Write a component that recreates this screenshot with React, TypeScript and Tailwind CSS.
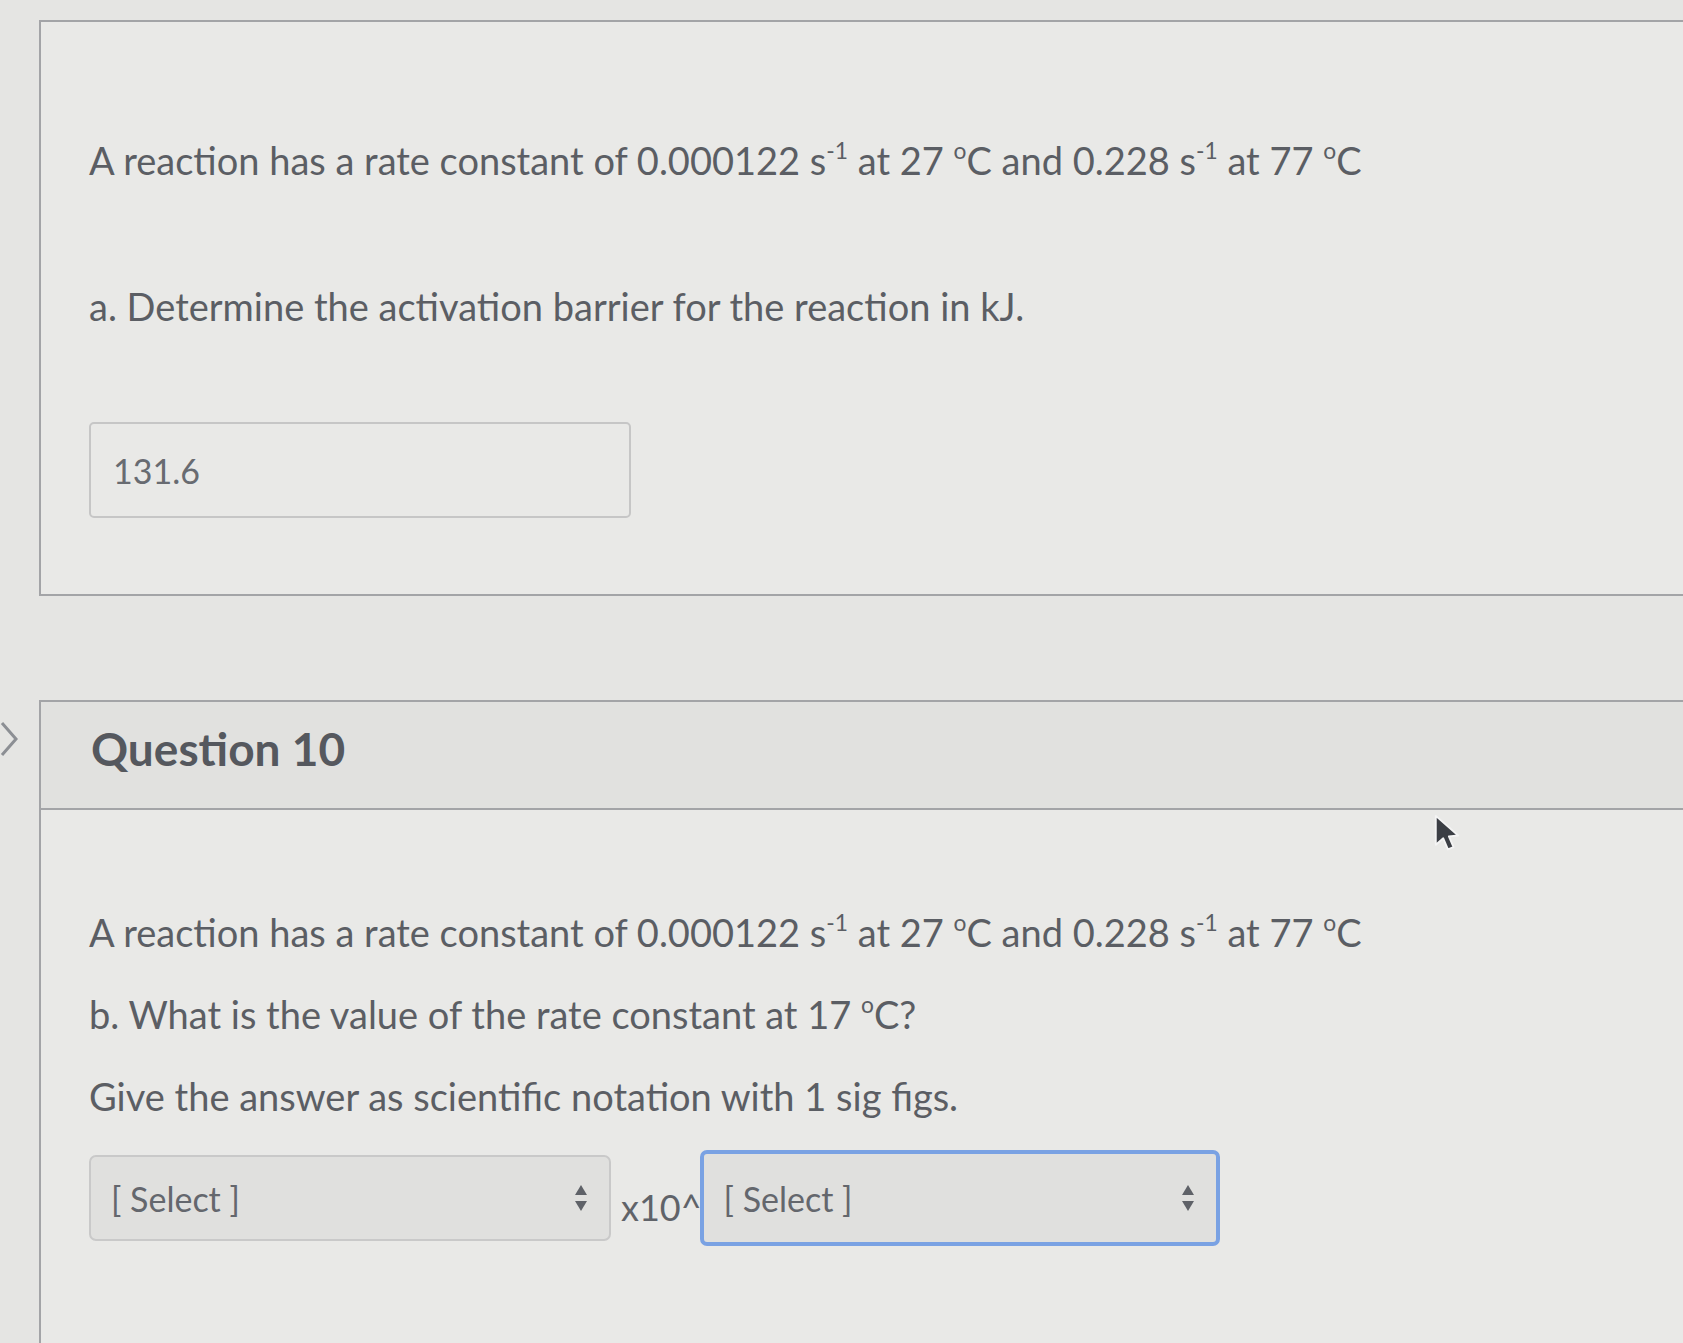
import React from 'react';

const textColor = 'text-[#5b5e64]';

function Sup({ children }: { children: React.ReactNode }) {
  return <sup className="text-[0.6em] -top-[0.7em]">{children}</sup>;
}

function RateLine() {
  return (
    <p className="leading-[48px]">
      A reaction has a rate constant of 0.000122 s<Sup>-1</Sup> at 27 <Sup>o</Sup>C and 0.228 s<Sup>-1</Sup> at 77{' '}
      <Sup>o</Sup>C
    </p>
  );
}

function UpDown() {
  return (
    <svg width="16" height="30" viewBox="0 0 16 30" className="shrink-0">
      <path d="M8 2 L14 12 L2 12 Z" fill="#5f6268" />
      <path d="M8 28 L14 18 L2 18 Z" fill="#5f6268" />
    </svg>
  );
}

function SelectBox({ focused, width }: { focused?: boolean; width: string }) {
  return (
    <div
      className={`${width} flex items-center justify-between rounded-[7px] bg-[#e0e0de] pl-5 pr-5 text-[34px] ${
        focused
          ? 'h-[96px] border-[4px] border-[#7aa2e3]'
          : 'h-[86px] border-2 border-[#c9c9c9]'
      }`}
    >
      <span className="text-[#64676d]">[ Select ]</span>
      <UpDown />
    </div>
  );
}

export default function App() {
  return (
    <div
      className={`min-h-[1343px] w-full bg-[#e5e5e3] ${textColor} flex`}
      style={{ fontFamily: 'Lato, "Open Sans", sans-serif' }}
    >
      {/* left gutter */}
      <div className="w-[39px] shrink-0 relative">
        <svg
          width="20"
          height="40"
          viewBox="0 0 20 40"
          className="absolute left-0 top-[719px]"
        >
          <path d="M2 4 L16 20 L2 36" fill="none" stroke="#8c8f94" strokeWidth="3" />
        </svg>
      </div>

      <div className="flex-1 flex flex-col pt-[20px]">
        {/* Previous question body */}
        <section className="border-t-2 border-b-2 border-l-2 border-[#a3a4a7] bg-[#e9e9e7] h-[576px] pl-[48px] pt-[114px] text-[38px]">
          <RateLine />
          <p className="leading-[48px] mt-[98px]">a. Determine the activation barrier for the reaction in kJ.</p>
          <div className="mt-[92px] w-[542px] h-[96px] rounded-[5px] border-2 border-[#c6c6c6] bg-[#e9e9e7] flex items-center pl-[22px] text-[34px] text-[#686b71]">
            131.6
          </div>
        </section>

        {/* Question 10 */}
        <section className="mt-[104px] flex-1 border-t-2 border-l-2 border-[#a3a4a7] bg-[#e9e9e7]">
          <header className="h-[108px] border-b-2 border-[#a3a4a7] bg-[#e1e1df] pl-[50px] flex items-center">
            <h2 className="text-[46px] font-bold text-[#55585e] -mt-[14px]">Question 10</h2>
          </header>

          <div className="relative pl-[48px] pt-[98px] text-[38px]">
            <svg
              width="28"
              height="42"
              viewBox="0 0 30 45"
              className="absolute left-[1392px] top-[4px]"
            >
              <path
                d="M3 2 L3 33 L11 26 L16 38 L22 35.5 L17 24 L27 23 Z"
                fill="#3b3e44"
                stroke="#f4f4f4"
                strokeWidth="2"
                strokeLinejoin="round"
              />
            </svg>

            <RateLine />
            <p className="leading-[48px] mt-[34px]">
              b. What is the value of the rate constant at 17 <Sup>o</Sup>C?
            </p>
            <p className="leading-[48px] mt-[34px]">Give the answer as scientific notation with 1 sig figs.</p>

            <div className="mt-[30px] flex items-center">
              <SelectBox width="w-[522px]" />
              <span className="ml-[10px] -mr-[2px] mt-[18px] text-[36px] text-[#606369]">x10^</span>
              <SelectBox width="w-[520px]" focused />
            </div>
          </div>
        </section>
      </div>
    </div>
  );
}
